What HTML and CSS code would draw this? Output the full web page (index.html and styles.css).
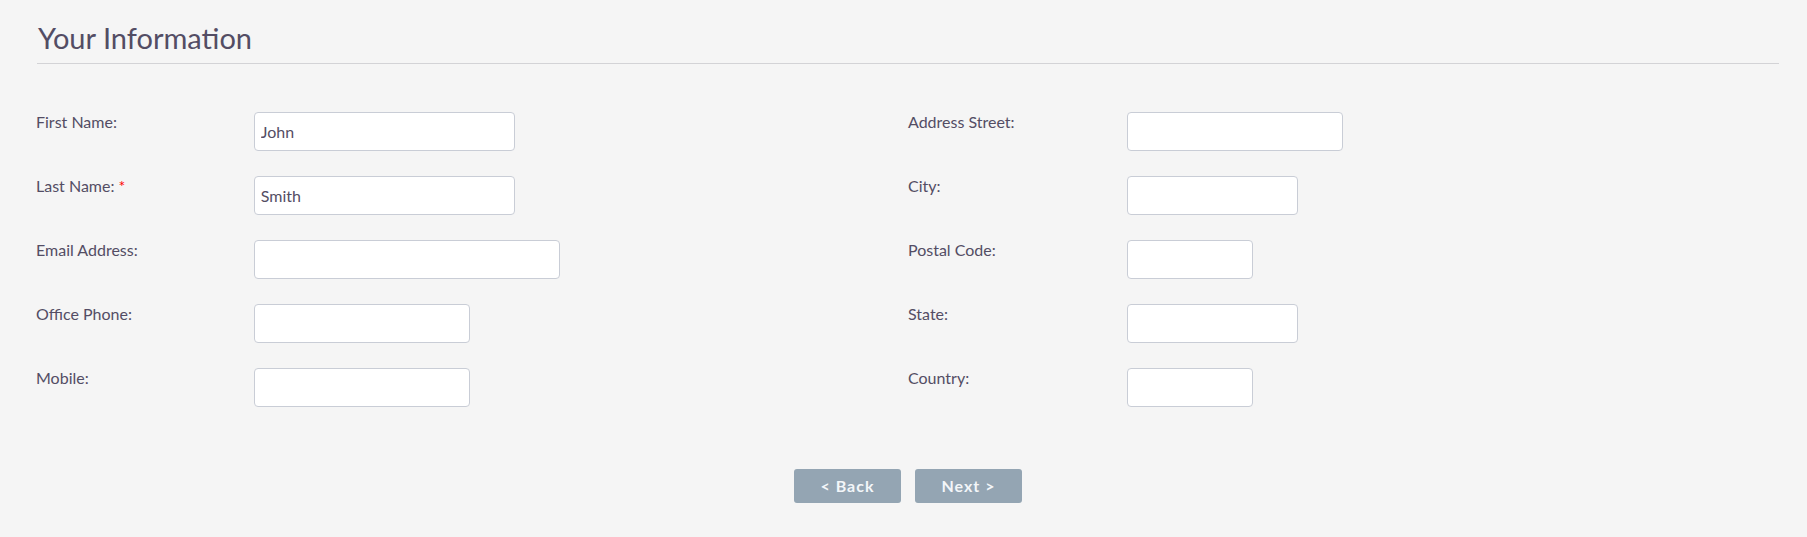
FILE: index.html
```html
<!DOCTYPE html>
<html lang="en">
<head>
<meta charset="utf-8">
<title>Your Information</title>
<link rel="stylesheet" href="styles.css">
</head>
<body>
<div class="page">
  <h2 class="title">Your Information</h2>
  <form class="form">
    <div class="cols">
      <div class="col">
        <div class="row"><label class="lbl">First Name:</label><div class="field"><input class="inp w260" type="text" value="John"></div></div>
        <div class="row"><label class="lbl">Last Name: <span class="req">*</span></label><div class="field"><input class="inp w260" type="text" value="Smith"></div></div>
        <div class="row"><label class="lbl">Email Address:</label><div class="field"><input class="inp w306" type="text"></div></div>
        <div class="row"><label class="lbl">Office Phone:</label><div class="field"><input class="inp w216" type="text"></div></div>
        <div class="row"><label class="lbl">Mobile:</label><div class="field"><input class="inp w216" type="text"></div></div>
      </div>
      <div class="col">
        <div class="row"><label class="lbl">Address Street:</label><div class="field"><input class="inp w216" type="text"></div></div>
        <div class="row"><label class="lbl">City:</label><div class="field"><input class="inp w171" type="text"></div></div>
        <div class="row"><label class="lbl">Postal Code:</label><div class="field"><input class="inp w126" type="text"></div></div>
        <div class="row"><label class="lbl">State:</label><div class="field"><input class="inp w171" type="text"></div></div>
        <div class="row"><label class="lbl">Country:</label><div class="field"><input class="inp w126" type="text"></div></div>
      </div>
    </div>
    <div class="actions">
      <button type="button" class="btn">&lt; Back</button>
      <button type="button" class="btn">Next &gt;</button>
    </div>
  </form>
</div>
</body>
</html>
```

FILE: styles.css
```css
html, body {
  margin: 0;
  padding: 0;
  background: #f5f5f5;
}
body {
  font-family: Lato, "Open Sans", sans-serif;
  color: #534d64;
}
.page {
  padding: 0 28px 0 37px;
}
.title {
  margin: 21px 0 0 0;
  padding: 0 0 7px 1px;
  font-size: 29px;
  line-height: 1.2;
  font-weight: 400;
  color: #534d64;
  border-bottom: 1px solid #d3d3d6;
}
.form {
  margin: 48px 0 0 0;
}
.cols {
  display: grid;
  grid-template-columns: 1fr 1fr;
}
.row {
  display: flex;
  align-items: flex-start;
  height: 39px;
  margin-bottom: 25px;
}
.lbl {
  flex: 0 0 25%;
  box-sizing: border-box;
  font-size: 16px;
  line-height: 20px;
  color: #534d64;
}
.col:first-child .lbl {
  margin-left: -1px;
}
.req {
  color: #ff0000;
}
.field {
  flex: 1;
}
.col:last-child .field {
  padding-left: 1px;
}
.inp {
  box-sizing: border-box;
  height: 39px;
  margin: 0;
  padding: 0 6px;
  border: 1px solid #c9cdd6;
  border-radius: 4px;
  background: #fff;
  font-family: Lato, "Open Sans", sans-serif;
  font-size: 16px;
  color: #534d64;
  outline: none;
}
.w260 { width: 261px; }
.w306 { width: 306px; }
.w216 { width: 216px; }
.w171 { width: 171px; }
.w126 { width: 126px; }
.actions {
  display: flex;
  justify-content: center;
  gap: 14px;
  margin-top: 37px;
}
.btn {
  box-sizing: border-box;
  width: 107px;
  height: 34px;
  border: none;
  border-radius: 3px;
  background: #94a5b3;
  color: #f3f6f9;
  font-family: Lato, "Open Sans", sans-serif;
  font-size: 16px;
  font-weight: 700;
  letter-spacing: 1px;
  padding: 0;
}
```
